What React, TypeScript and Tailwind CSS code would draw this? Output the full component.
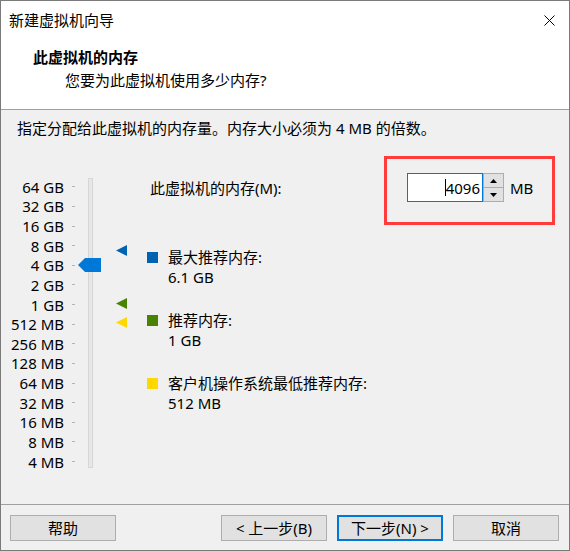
const scale = [
  "64 GB", "32 GB", "16 GB", "8 GB", "4 GB", "2 GB", "1 GB", "512 MB",
  "256 MB", "128 MB", "64 MB", "32 MB", "16 MB", "8 MB", "4 MB",
];

const legend = [
  { swatch: "bg-[#0063b1]", label: "最大推荐内存:", value: "6.1 GB", mt: "mt-[45px]" },
  { swatch: "bg-[#498205]", label: "推荐内存:", value: "1 GB", mt: "mt-[23px]" },
  { swatch: "bg-[#ffd800]", label: "客户机操作系统最低推荐内存:", value: "512 MB", mt: "mt-[23px]" },
];

const markers = [
  { fill: "#0063b1", top: "top-[72px]" },
  { fill: "#498205", top: "top-[125px]" },
  { fill: "#ffd800", top: "top-[144px]" },
];

const Button = ({ label, primary = false }: { label: string; primary?: boolean }) => (
  <button
    className={
      "w-[106px] h-[26px] bg-[#e1e1e1] text-[15px] leading-[20px] text-black flex items-center justify-center " +
      (primary ? "border-2 border-[#0078d7]" : "border border-[#adadad]")
    }
  >
    {label}
  </button>
);

export default function App() {
  return (
    <div
      className="relative w-[570px] h-[551px] border border-[#7a7a7a] bg-[#f0f0f0] flex flex-col text-black text-[15px] leading-[20px]"
      style={{ fontFamily: '"Noto Sans", "Noto Sans CJK SC", sans-serif' }}
    >
      {/* title bar + header */}
      <div className="bg-white h-[108px]">
        <div className="h-[38px] flex items-center justify-between pl-[8px] pr-[14px]">
          <span>新建虚拟机向导</span>
          <svg width="11" height="11" viewBox="0 0 11 11">
            <path d="M0.5 0.5 L10.5 10.5 M10.5 0.5 L0.5 10.5" stroke="#000" strokeWidth="1" />
          </svg>
        </div>
        <div className="pl-[32px] mt-[8px] font-bold">此虚拟机的内存</div>
        <div className="pl-[64px] mt-[3px]">您要为此虚拟机使用多少内存?</div>
      </div>
      <div className="h-px bg-[#a0a0a0]" />

      {/* body */}
      <div className="flex-1 flex flex-col">
        <p className="pl-[16px] pt-[8px]">指定分配给此虚拟机的内存量。内存大小必须为 4 MB 的倍数。</p>

        <div className="flex items-start mt-[35px]">
          {/* slider */}
          <div className="relative flex items-start">
            <div className="mt-[4px] flex flex-col">
              {scale.map((s) => (
                <div key={s} className="h-[19.64px] flex items-center">
                  <span className="w-[63px] text-right whitespace-nowrap">{s}</span>
                  <span className="ml-[8px] w-[3px] h-px bg-[#b4b4b4]" />
                </div>
              ))}
            </div>
            <div className="ml-[13px] mt-[5px] w-[5px] h-[290px] bg-[#e7e7e7] border border-[#d6d6d6]" />
            <svg className="absolute left-[77px] top-[85px]" width="23" height="14" viewBox="0 0 23 14">
              <polygon points="0,7 7,0 23,0 23,14 7,14" fill="#0078d7" />
            </svg>
          </div>

          {/* markers */}
          <div className="relative ml-[23px] w-[11px] h-[200px]">
            {markers.map((m) => (
              <svg key={m.fill} className={"absolute left-0 " + m.top} width="11" height="11" viewBox="0 0 11 11">
                <polygon points="11,0 0,5.5 11,11" fill={m.fill} />
              </svg>
            ))}
          </div>

          {/* form + legend */}
          <div className="ml-[20px] flex flex-col">
            <div className="h-[29px] flex items-center">
              <span className="pl-[3px] w-[260px]">此虚拟机的内存(M):</span>
              <div className="w-[76px] h-[29px] bg-white border border-[#0078d7] flex items-center justify-end pr-[2px]">
                <span className="w-px h-[17px] bg-black" />
                <span>4096</span>
              </div>
              <div className="w-[21px] h-[29px] flex flex-col">
                <div className="h-[15px] bg-[#e1e1e1] border border-[#adadad] flex items-center justify-center">
                  <svg width="7" height="4" viewBox="0 0 7 4"><polygon points="0,4 3.5,0 7,4" fill="#000" /></svg>
                </div>
                <div className="h-[14px] bg-[#e1e1e1] border border-t-0 border-[#adadad] flex items-center justify-center">
                  <svg width="7" height="4" viewBox="0 0 7 4"><polygon points="0,0 7,0 3.5,4" fill="#000" /></svg>
                </div>
              </div>
              <span className="ml-[6px]">MB</span>
            </div>

            {legend.map((l) => (
              <div key={l.label} className={"flex flex-col " + l.mt}>
                <div className="flex items-center gap-[10px]">
                  <span className={"w-[11px] h-[11px] " + l.swatch} />
                  <span>{l.label}</span>
                </div>
                <div className="pl-[21px]">{l.value}</div>
              </div>
            ))}
          </div>
        </div>
      </div>

      {/* footer */}
      <div className="h-px bg-[#a0a0a0]" />
      <div className="h-[45px] flex items-start pt-[10px] pl-[9px] pr-[10px]">
        <Button label="帮助" />
        <div className="flex-1" />
        <div className="flex gap-[10px]">
          <Button label="< 上一步(B)" />
          <Button label="下一步(N) >" primary />
          <Button label="取消" />
        </div>
      </div>

      {/* annotation */}
      <div className="absolute left-[383px] top-[155px] w-[171px] h-[69px] border-[3px] border-[#ff3b3b]" />
    </div>
  );
}
